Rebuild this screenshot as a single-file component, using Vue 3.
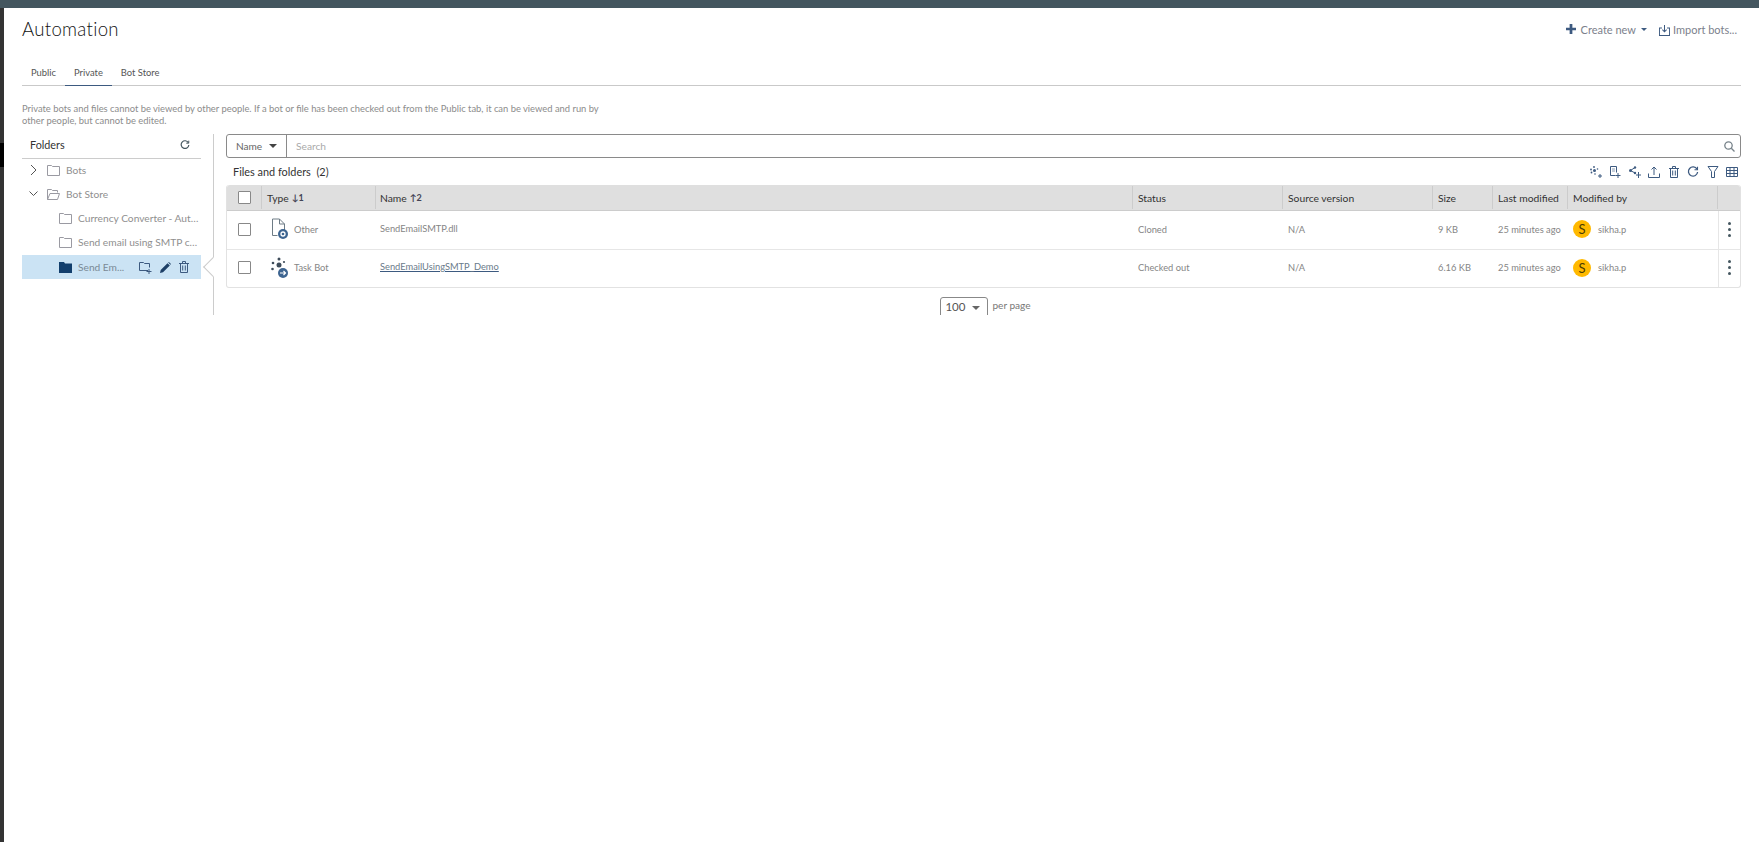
<script setup>
const files = [
  { kind: 'other', type: 'Other', name: 'SendEmailSMTP.dll', link: false, status: 'Cloned', size: '9 KB' },
  { kind: 'bot', type: 'Task Bot', name: 'SendEmailUsingSMTP_Demo', link: true, status: 'Checked out', size: '6.16 KB' }
]
</script>

<template>
  <div class="page">
    <div class="topbar"></div>
    <div class="frame">
      <div class="strip">
        <div class="strip-a"></div>
        <div class="strip-b"></div>
        <div class="strip-c"></div>
      </div>
      <main class="main">
        <header class="header">
          <h1 class="title">Automation</h1>
          <div class="actions">
            <span class="action">
              <svg class="plus" width="10" height="10" viewBox="0 0 11 11"><path d="M4 0h3v4h4v3H7v4H4V7H0V4h4z" fill="#3d5a80"/></svg>
              Create new
              <i class="mini-caret"></i>
            </span>
            <span class="action import">
              <svg width="11" height="11" viewBox="0 0 13 13" fill="none" stroke="#3d5a80" stroke-width="1.200"><path d="M3.500 3.500h-3v9h12v-9h-3"/><path d="M6.500 0v8M4 5.500l2.500 2.500 2.500-2.500"/></svg>
              Import bots...
            </span>
          </div>
        </header>

        <nav class="tabs">
          <span class="tab">Public</span>
          <span class="tab active">Private</span>
          <span class="tab">Bot Store</span>
        </nav>

        <p class="desc">Private bots and files cannot be viewed by other people. If a bot or file has been checked out from the Public tab, it can be viewed and run by other people, but cannot be edited.</p>

        <section class="content">
          <aside class="folders">
            <div class="folders-head">
              <span>Folders</span>
              <svg width="10" height="10" viewBox="0 0 12 12" fill="none" stroke="#44565f" stroke-width="1.400"><path d="M10 3.200A4.600 4.600 0 1 0 10.600 6"/><path d="M10.500 .8v3H7.500" stroke-width="1.200"/></svg>
            </div>
            <div class="tree-row">
              <svg class="chev" width="9" height="12" viewBox="0 0 9 12" fill="none" stroke="#555"><path d="M2 1l5 5-5 5"/></svg>
              <svg class="folder" width="13" height="11" viewBox="0 0 13 11" fill="none" stroke="#9a9aa2"><path d="M.5 10.500v-10h4l1 1h7v9z"/></svg>
              <span class="tree-text">Bots</span>
            </div>
            <div class="tree-row">
              <svg class="chev" width="9" height="12" viewBox="0 0 9 12" fill="none" stroke="#555"><path d="M.5 3.500l4 4 4-4"/></svg>
              <svg class="folder" width="13" height="11" viewBox="0 0 13 11" fill="none" stroke="#9a9aa2"><path d="M.5 10.500v-10h4l1 1h5v2M.5 10.500l2.500-6h9.500l-2 6z"/></svg>
              <span class="tree-text">Bot Store</span>
            </div>
            <div class="tree-row child">
              <svg class="folder" width="13" height="11" viewBox="0 0 13 11" fill="none" stroke="#9a9aa2"><path d="M.5 10.500v-10h4l1 1h7v9z"/></svg>
              <span class="tree-text ell">Currency Converter - Automation</span>
            </div>
            <div class="tree-row child">
              <svg class="folder" width="13" height="11" viewBox="0 0 13 11" fill="none" stroke="#9a9aa2"><path d="M.5 10.500v-10h4l1 1h7v9z"/></svg>
              <span class="tree-text ell">Send email using SMTP client for Automation</span>
            </div>
            <div class="tree-row child selected">
              <svg class="folder" width="13" height="11" viewBox="0 0 13 11"><path d="M0 11V0h5l1 1.500h7V11z" fill="#123f6d"/></svg>
              <span class="tree-text sel-text">Send Em...</span>
              <span class="sel-icons">
                <svg width="13" height="13" viewBox="0 0 13 13" fill="none" stroke="#3d5a80"><path d="M9 9.500H.5v-8h4l1 1h5v4"/><path d="M10 8v5M7.500 10.500h5"/></svg>
                <svg width="11" height="11" viewBox="0 0 11 11"><path d="M0 11l.7-3L7.500 1.200l2.300 2.300L3 10.300zM8.200.5l.7-.5 2.100 2.100-.6.700z" fill="#1d3f66"/></svg>
                <svg width="10" height="12" viewBox="0 0 10 12" fill="none" stroke="#3d5a80"><path d="M1.500 3v8.500h7V3M0 2.500h10M3.500 2.500V.5h3v2M3.700 4.500v5M6.300 4.500v5"/></svg>
              </span>
            </div>
          </aside>

          <div class="divider"><i class="notch"></i></div>

          <div class="panel">
            <div class="search">
              <span class="search-by">Name <i class="caret"></i></span>
              <span class="search-input">Search</span>
              <svg class="lens" width="11" height="11" viewBox="0 0 11 11" fill="none" stroke="#77838a" stroke-width="1.300"><circle cx="4.500" cy="4.500" r="3.700"/><path d="M7.300 7.300L10.500 10.500"/></svg>
            </div>

            <div class="list-head">
              <span class="list-title">Files and folders&nbsp; (2)</span>
              <div class="tools">
                <svg viewBox="0 0 12 12" fill="#3d5a80"><circle cx="4" cy="1" r=".9"/><circle cx="1" cy="3.500" r=".9"/><circle cx="4.500" cy="4.500" r="1.500"/><circle cx="7.500" cy="3" r=".8"/><circle cx="1.500" cy="6.500" r=".9"/><circle cx="5" cy="8" r=".8"/><path d="M9.500 8v4h1V8zM8 9.500v1h4v-1z"/></svg>
                <svg viewBox="0 0 12 12" fill="none" stroke="#3d5a80"><path d="M6.500 9.500h-5v-9h6v6"/><path d="M3 3h3M3 5h3" opacity=".6"/><path d="M9 7v5M6.500 9.500h5"/></svg>
                <svg viewBox="0 0 12 12" fill="#3d5a80"><circle cx="1.500" cy="4.500" r="1.500"/><circle cx="6" cy="1.500" r="1.200"/><circle cx="6" cy="7" r="1.200"/><path d="M1.500 4.500L6 1.500M1.500 4.500L6 7" stroke="#3d5a80" fill="none"/><path d="M9 6v6h1V6zM7 8.500v1h5v-1z"/></svg>
                <svg viewBox="0 0 12 12" fill="none" stroke="#3d5a80"><path d="M.5 7.500v4h11v-4"/><path d="M6 9V1M3.500 3.500L6 1l2.500 2.500"/></svg>
                <svg viewBox="0 0 10 12" fill="none" stroke="#3d5a80"><path d="M1.500 3v8.500h7V3M0 2.500h10M3.500 2.500V.5h3v2M3.700 4.500v5M6.300 4.500v5"/></svg>
                <svg viewBox="0 0 12 12" fill="none" stroke="#3d5a80" stroke-width="1.300"><path d="M10 3.200A4.600 4.600 0 1 0 10.600 6"/><path d="M10.500 .8v3H7.500" stroke-width="1.100"/></svg>
                <svg viewBox="0 0 11 12" fill="none" stroke="#3d5a80"><path d="M.5.500h10L7 5.500v6H4v-6z"/></svg>
                <svg viewBox="0 0 12 10" fill="none" stroke="#3d5a80"><path d="M.5.500h11v9H.5zM.5 3.500h11M.5 6.500h11M4 .5v9M8 .5v9"/></svg>
              </div>
            </div>

            <div class="table">
              <div class="tr thead">
                <div class="td check"><i class="box"></i></div>
                <div class="td">Type <b class="sort">↓1</b></div>
                <div class="td namehead">Name <b class="sort">↑2</b></div>
                <div class="td">Status</div>
                <div class="td">Source version</div>
                <div class="td">Size</div>
                <div class="td">Last modified</div>
                <div class="td">Modified by</div>
                <div class="td last"></div>
              </div>
              <div v-for="(f, i) in files" :key="f.name" class="tr body" :class="'row' + i">
                <div class="td check"><i class="box"></i></div>
                <div class="td type">
                  <svg v-if="f.kind === 'other'" class="type-icon" width="18" height="22" viewBox="0 0 18 22">
                    <path d="M1.500 17.500V1h7l5 5v6M8.500 1v5h5M1.500 17.500h5" fill="none" stroke="#6e7c86"/>
                    <circle cx="12" cy="16" r="5" fill="#3d6490"/>
                    <circle cx="12" cy="16" r="2" fill="none" stroke="#fff" stroke-width="1.300"/>
                  </svg>
                  <svg v-else class="type-icon" width="18" height="22" viewBox="0 0 18 22">
                    <g fill="#3e4c5a"><circle cx="8" cy="2" r="1.500"/><circle cx="2" cy="6" r="1.300"/><circle cx="8" cy="8" r="2.500"/><circle cx="1.500" cy="12" r="1.300"/><circle cx="13" cy="5" r="1.100"/></g>
                    <circle cx="12" cy="16" r="5" fill="#3d6490"/>
                    <path d="M9 16h5M12.500 14l2 2-2 2" fill="none" stroke="#fff" stroke-width="1.200"/>
                  </svg>
                  <span>{{ f.type }}</span>
                </div>
                <div class="td name"><span :class="{ link: f.link }">{{ f.name }}</span></div>
                <div class="td">{{ f.status }}</div>
                <div class="td">N/A</div>
                <div class="td">{{ f.size }}</div>
                <div class="td">25 minutes ago</div>
                <div class="td user"><span class="avatar">S</span><span>sikha.p</span></div>
                <div class="td last kebab"><i></i><i></i><i></i></div>
              </div>
            </div>

            <div class="pager">
              <span class="select"><span>100</span><i class="caret"></i></span>
              <span class="per">per page</span>
            </div>
          </div>
        </section>
      </main>
    </div>
  </div>
</template>

<style>
html, body { margin: 0; background: #fff; }
</style>

<style scoped>
.page { height: 842px; display: flex; flex-direction: column; overflow: hidden; font-family: Lato, "Open Sans", sans-serif; color: #858585; font-size: 9.300px; }
.topbar { height: 8px; background: #44565f; flex: none; }
.frame { flex: 1; display: flex; min-height: 0; }
.strip { width: 4px; display: flex; flex-direction: column; flex: none; }
.strip-a { height: 135px; background: #333; }
.strip-b { height: 24px; background: #000; }
.strip-c { flex: 1; background: #333; }
.main { flex: 1; min-width: 0; padding: 0 18px; }

.header { height: 44px; display: flex; justify-content: space-between; align-items: flex-start; }
.title { margin: 10px 0 0; font-size: 18.600px; line-height: 22px; font-weight: 300; color: #111; letter-spacing: .3px; }
.actions { display: flex; gap: 12px; margin-top: 15px; padding-right: 4px; font-size: 11px; line-height: 14px; color: #7c7f8c; font-weight: 400; }
.action { display: flex; align-items: center; gap: 3px; }
.plus { margin-right: 2px; margin-top: -2px; }
.mini-caret { width: 0; height: 0; border: 3px solid transparent; border-top: 3px solid #3d5a80; border-bottom: 0; margin: -2px 0 0 2px; }

.tabs { height: 34px; display: flex; align-items: flex-end; border-bottom: 1px solid #c9c9c9; box-sizing: border-box; color: #555; }
.tab { height: 23px; line-height: 22px; padding: 0 9px; box-sizing: border-box; font-size: 9.400px; }
.tab.active { border-bottom: 1px solid #3d5a80; margin-bottom: -1px; height: 24px; }

.desc { margin: 17px 0 0; width: 590px; height: 24px; font-size: 9.400px; line-height: 11.500px; color: #8c8c8c; font-weight: 400; }

.content { margin-top: 7px; display: flex; height: 181px; }
.folders { width: 179px; flex: none; }
.folders-head { height: 25px; box-sizing: border-box; border-bottom: 1px solid #ccc; display: flex; align-items: center; justify-content: space-between; padding: 0 11px 3px 8px; color: #333; font-size: 10.800px; }
.tree-row { height: 24px; box-sizing: border-box; padding-bottom: 2px; display: flex; align-items: center; padding-left: 7px; }
.chev { margin-right: 9px; flex: none; }
.folder { flex: none; margin-right: 6px; }
.tree-text { color: #8f8f8f; font-size: 10.200px; white-space: nowrap; }
.child { padding-left: 37px; }
.ell { overflow: hidden; text-overflow: ellipsis; width: 121px; }
.selected { background: #cbe3f4; padding-bottom: 0; }
.sel-text { width: 54px; flex: none; color: #7a8a96; }
.sel-icons { display: flex; align-items: center; gap: 8px; margin-left: 7px; }

.divider { width: 1px; background: #ccc; margin: 0 12px; position: relative; flex: none; }
.notch { position: absolute; left: -7px; top: 126px; width: 14px; height: 14px; box-sizing: border-box; background: #fff; border-left: 1px solid #ccc; border-bottom: 1px solid #ccc; transform: rotate(45deg); }

.panel { flex: 1; min-width: 0; overflow: hidden; }
.search { height: 24px; box-sizing: border-box; border: 1px solid #8a8a8a; border-radius: 3px; display: flex; align-items: center; padding-right: 5px; }
.search-by { width: 60px; height: 100%; box-sizing: border-box; border-right: 1px solid #8a8a8a; display: flex; align-items: center; gap: 7px; padding-left: 9px; color: #666; font-size: 10.100px; }
.caret { width: 0; height: 0; border: 4px solid transparent; border-top: 4px solid #444; border-bottom: 0; }
.search-input { flex: 1; padding-left: 9px; color: #aaa; font-size: 10.200px; }

.list-head { height: 27px; display: flex; align-items: center; justify-content: space-between; padding: 0 3px 0 7px; }
.list-title { color: #333; font-size: 10.900px; }
.tools { display: flex; align-items: center; gap: 7.500px; }
.tools svg { width: 12px; height: 12px; display: block; }

.table { border: 1px solid #e2e2e2; border-top: 0; border-radius: 3px; box-sizing: border-box; }
.tr { display: grid; grid-template-columns: 35px 114px 757px 150px 150px 60px 75px 150px 1fr; }
.td { display: flex; align-items: center; padding-left: 5px; white-space: nowrap; min-width: 0; }
.thead { height: 26px; background: #dfdfdf; border-bottom: 1px solid #ccc; box-sizing: border-box; border-radius: 3px 3px 0 0; color: #333; font-size: 10.300px; }
.thead .td { border-right: 1px solid #ccc; margin: 1px 0; }
.thead .td.last { border-right: 0; }
.thead .namehead { padding-left: 4px; }
.sort { margin-left: 3px; font-size: 9px; color: #445; }
.body { border-bottom: 1px solid #e6e6e6; height: 39px; padding-bottom: 2px; box-sizing: border-box; }
.row1 { border-bottom: 0; height: 37px; }
.check { justify-content: flex-start; padding-left: 11px; }
.box { width: 13px; height: 13px; box-sizing: border-box; border: 1px solid #888; border-radius: 1px; background: #fff; display: block; }
.type { padding-left: 9px; gap: 5px; }
.type-icon { flex: none; }
.name { padding-bottom: 2px; padding-left: 4px; }
.link { color: #6a7a8a; text-decoration: underline; text-decoration-color: #3d5a80; }
.avatar { width: 18px; height: 18px; border-radius: 50%; background: #ffb900; color: #4a3a00; display: flex; align-items: center; justify-content: center; font-size: 13px; flex: none; margin-right: 7px; }
.user { padding-left: 5px; }
.last { padding-left: 0; }
.kebab { flex-direction: column; justify-content: center; gap: 3px; border-left: 1px solid #e6e6e6; margin-bottom: -2px; padding-bottom: 2px; }
.kebab i { width: 3px; height: 3px; border-radius: 50%; background: #44565f; display: block; }

.pager { margin-top: 9px; display: flex; justify-content: center; align-items: flex-start; height: 19px; overflow: hidden; padding-left: 4px; }
.select { width: 48px; height: 28px; box-sizing: border-box; border: 1px solid #888; border-radius: 3px; display: flex; justify-content: space-between; padding: 2px 7px 0 4px; color: #555; font-size: 11.500px; line-height: 14px; }
.select .caret { margin-top: 6px; border-top-color: #666; }
.per { margin: 2px 0 0 4px; color: #777; font-size: 10.100px; }
</style>
